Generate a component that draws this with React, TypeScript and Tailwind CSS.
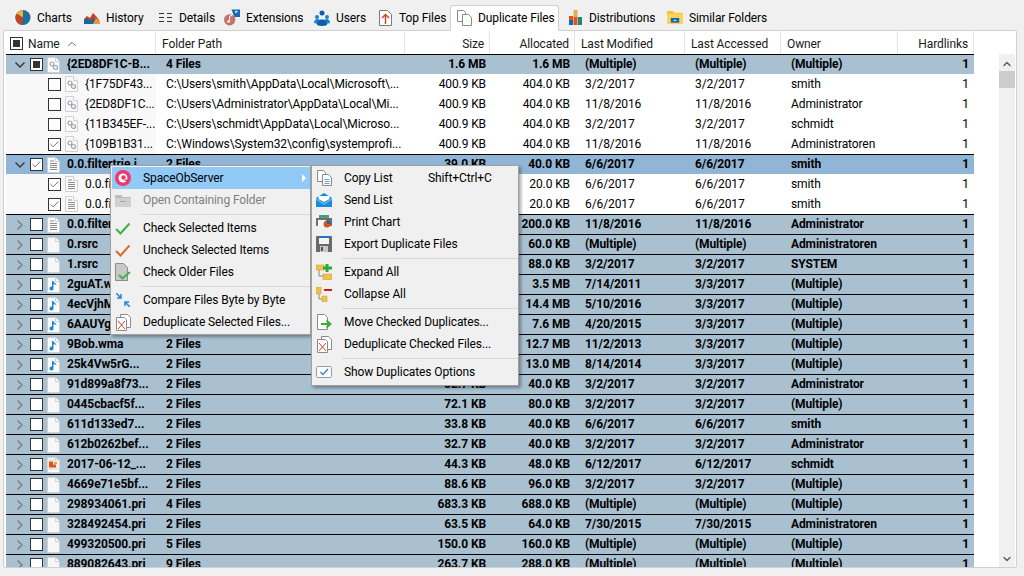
import type { ReactNode } from "react";
import { Check, ChevronDown, ChevronRight, ChevronUp } from "lucide-react";

type Kind = "dll" | "text" | "blank" | "music" | "image";

type RowData = {
  name: string;
  path: string;
  size: string;
  alloc: string;
  modified: string;
  accessed: string;
  owner: string;
  kind: Kind;
  check?: "none" | "checked" | "mixed";
  child?: boolean;
  open?: boolean;
  selected?: boolean;
};

const group = (name: string, path: string, size: string, alloc: string, modified: string, accessed: string, owner: string, kind: Kind = "blank"): RowData => ({
  name, path, size, alloc, modified, accessed, owner, kind,
});

const rows: RowData[] = [
  { ...group("{2ED8DF1C-B...", "4 Files", "1.6 MB", "1.6 MB", "(Multiple)", "(Multiple)", "(Multiple)", "dll"), check: "mixed", open: true },
  { ...group("{1F75DF43...", "C:\\Users\\smith\\AppData\\Local\\Microsoft\\...", "400.9 KB", "404.0 KB", "3/2/2017", "3/2/2017", "smith", "dll"), child: true },
  { ...group("{2ED8DF1C...", "C:\\Users\\Administrator\\AppData\\Local\\Mi...", "400.9 KB", "404.0 KB", "11/8/2016", "11/8/2016", "Administrator", "dll"), child: true },
  { ...group("{11B345EF-...", "C:\\Users\\schmidt\\AppData\\Local\\Microso...", "400.9 KB", "404.0 KB", "3/2/2017", "3/2/2017", "schmidt", "dll"), child: true },
  { ...group("{109B1B31...", "C:\\Windows\\System32\\config\\systemprofi...", "400.9 KB", "404.0 KB", "11/8/2016", "11/8/2016", "Administratoren", "dll"), child: true, check: "checked" },
  { ...group("0.0.filtertrie.i...", "2 Files", "39.0 KB", "40.0 KB", "6/6/2017", "6/6/2017", "smith", "text"), check: "checked", open: true, selected: true },
  { ...group("0.0.filtertrie...", "C:\\Users\\smith\\AppData\\Local\\Packages\\...", "19.5 KB", "20.0 KB", "6/6/2017", "6/6/2017", "smith", "text"), child: true, check: "checked" },
  { ...group("0.0.filtertrie...", "C:\\Users\\smith\\AppData\\Local\\Packages\\...", "19.5 KB", "20.0 KB", "6/6/2017", "6/6/2017", "smith", "text"), child: true, check: "checked" },
  group("0.0.filtertrie...", "4 Files", "195.1 KB", "200.0 KB", "11/8/2016", "11/8/2016", "Administrator", "text"),
  group("0.rsrc", "3 Files", "58.2 KB", "60.0 KB", "(Multiple)", "(Multiple)", "Administratoren"),
  group("1.rsrc", "2 Files", "86.4 KB", "88.0 KB", "3/2/2017", "3/2/2017", "SYSTEM"),
  group("2guAT.wma", "2 Files", "3.5 MB", "3.5 MB", "7/14/2011", "3/3/2017", "(Multiple)", "music"),
  group("4ecVjhM.wma", "2 Files", "14.4 MB", "14.4 MB", "5/10/2016", "3/3/2017", "(Multiple)", "music"),
  group("6AAUYg.wma", "2 Files", "7.6 MB", "7.6 MB", "4/20/2015", "3/3/2017", "(Multiple)", "music"),
  group("9Bob.wma", "2 Files", "12.7 MB", "12.7 MB", "11/2/2013", "3/3/2017", "(Multiple)", "music"),
  group("25k4Vw5rG...", "2 Files", "13.0 MB", "13.0 MB", "8/14/2014", "3/3/2017", "(Multiple)", "music"),
  group("91d899a8f73...", "2 Files", "32.7 KB", "40.0 KB", "3/2/2017", "3/2/2017", "Administrator"),
  group("0445cbacf5f...", "2 Files", "72.1 KB", "80.0 KB", "3/2/2017", "3/2/2017", "(Multiple)"),
  group("611d133ed7...", "2 Files", "33.8 KB", "40.0 KB", "6/6/2017", "6/6/2017", "smith"),
  group("612b0262bef...", "2 Files", "32.7 KB", "40.0 KB", "3/2/2017", "3/2/2017", "Administrator"),
  group("2017-06-12_...", "2 Files", "44.3 KB", "48.0 KB", "6/12/2017", "6/12/2017", "schmidt", "image"),
  group("4669e71e5bf...", "2 Files", "88.6 KB", "96.0 KB", "3/2/2017", "3/2/2017", "(Multiple)"),
  group("298934061.pri", "4 Files", "683.3 KB", "688.0 KB", "(Multiple)", "(Multiple)", "(Multiple)"),
  group("328492454.pri", "2 Files", "63.5 KB", "64.0 KB", "7/30/2015", "7/30/2015", "Administratoren"),
  group("499320500.pri", "5 Files", "150.0 KB", "160.0 KB", "(Multiple)", "(Multiple)", "(Multiple)"),
  group("889082643.pri", "9 Files", "263.7 KB", "288.0 KB", "(Multiple)", "(Multiple)", "(Multiple)"),
];

function FileIcon({ kind }: { kind: Kind }) {
  return (
    <svg width="13" height="16" viewBox="0 0 13 16" className="shrink-0">
      <path d="M.5.5h8l4 4v11H.5z" fill={kind === "blank" ? "#f7f7f7" : "#fbfbfb"} stroke="#d0d0d0" />
      <path d="M8.5.5v4h4" fill="#fff" stroke="#d0d0d0" />
      {kind === "text" && <path d="M3 4h4M3 6.5h7M3 8.5h7M3 10.5h7M3 12.5h7" stroke="#8d8d8d" />}
      {kind === "dll" && (
        <g fill="none" stroke="#9aa3ad" strokeWidth="1.2">
          <circle cx="5" cy="7" r="2" />
          <circle cx="8.5" cy="10.5" r="2" />
        </g>
      )}
      {kind === "music" && (
        <path d="M6.5 4v7.5a2 2 0 1 1-1.500-1.900V4h1.500c0 2 3 2 3 4.500-1-1.200-2-1.300-3-1.300z" fill="#1e88d8" />
      )}
      {kind === "image" && (
        <g>
          <rect x=".5" y="3" width="12" height="9" fill="#f7f1e8" stroke="#d8d8d8" />
          <path d="M2 4.500h4v3h3v3H2z" fill="#d9541e" />
          <rect x="7" y="5" width="3" height="2" fill="#e8a33a" />
        </g>
      )}
    </svg>
  );
}

function Box({ state = "none" }: { state?: "none" | "checked" | "mixed" }) {
  return (
    <span className="flex h-[13px] w-[13px] shrink-0 items-center justify-center border border-[#333333] bg-white">
      {state === "checked" && <Check size={11} strokeWidth={1.5} className="text-[#333333]" />}
      {state === "mixed" && <span className="h-[7px] w-[7px] bg-[#333333]" />}
    </span>
  );
}

function TreeRow({ row }: { row: RowData }) {
  const rowBg = row.child ? "bg-white" : row.selected ? "bg-[#90b5d6] font-bold" : "bg-[#a9c0d1] font-bold";
  const line = row.child ? "" : "border-t border-black";
  // group rows carry a top line, their text still sits one pixel higher than the boxes
  const lift = row.child ? "" : "pb-[2px]";
  return (
    <div className={`grid h-5 grid-cols-[150px_249px_85px_85px_110px_96px_117px_76px] items-center whitespace-nowrap text-black ${rowBg} ${line}`}>
      <div className={`flex h-full items-center overflow-hidden ${row.child ? "bg-[#f8f8f8] pl-[42px]" : "pl-[10px]"}`}>
        {!row.child && (
          <span className="mr-[6px] w-[8px] shrink-0">
            {row.open ? (
              <ChevronDown size={16} strokeWidth={2.500} className="-ml-[4px] text-[#404040]" />
            ) : (
              <ChevronRight size={16} strokeWidth={2.500} className="-ml-[4px] text-[#808080]" />
            )}
          </span>
        )}
        <Box state={row.check} />
        <span className="ml-[4px]">
          <FileIcon kind={row.kind} />
        </span>
        <span className={`ml-[7px] ${lift}`}>{row.name}</span>
      </div>
      <div className={`pl-[10px] ${lift}`}>{row.path}</div>
      <div className={`pr-[4px] text-right ${lift}`}>{row.size}</div>
      <div className={`pr-[5px] text-right ${lift}`}>{row.alloc}</div>
      <div className={`pl-[10px] ${lift}`}>{row.modified}</div>
      <div className={`pl-[10px] ${lift}`}>{row.accessed}</div>
      <div className={`pl-[10px] ${lift}`}>{row.owner}</div>
      <div className={`pr-[5px] text-right ${lift}`}>1</div>
    </div>
  );
}

function HeadCell({ children, right, className = "" }: { children: ReactNode; right?: boolean; className?: string }) {
  return (
    <div className={`flex h-[23px] items-center border-r border-[#e5e5e5] pt-[2px] text-[#1a1a1a] ${right ? "justify-end pr-[5px]" : "pl-[6px]"} ${className}`}>
      {children}
    </div>
  );
}

const PieIcon = () => (
  <svg width="17" height="17" viewBox="0 0 17 17">
    <circle cx="8.500" cy="8.500" r="8" fill="#1d6f9e" />
    <path d="M8.500 8.500V.5A8 8 0 0 0 1.500 4.500z" fill="#e8b33c" />
    <path d="M8.500 8.500L1.500 4.500A8 8 0 0 0 7 16.400z" fill="#c8431f" />
  </svg>
);
const HistoryIcon = () => (
  <svg width="16" height="14" viewBox="0 0 16 14">
    <path d="M0 13V8l3-3 3 2 3-5 3 3 3 4 1 4z" fill="#c9412a" />
    <path d="M0 13V9l3-2 3 3 3-3 3 3 4 1v2z" fill="#17689c" />
    <path d="M9 13l3-6 4 4v2z" fill="#e89a3c" />
  </svg>
);
const DetailsIcon = () => (
  <svg width="13" height="12" viewBox="0 0 13 12" stroke="#333333">
    <path d="M0 1.500h5M8 1.500h5M0 5.500h5M8 5.500h5M0 9.500h5M8 9.500h5" />
  </svg>
);
const ExtensionsIcon = () => (
  <svg width="17" height="17" viewBox="0 0 17 17">
    <path d="M8 0h9v8H11z" fill="#1668b0" />
    <path d="M12 1l3 1-3 2z" fill="#fff" />
    <circle cx="6" cy="11" r="6" fill="#c8706a" />
    <path d="M6 7v5.500M6 7l2.500-.7" stroke="#fff" fill="none" />
    <circle cx="4.800" cy="12.800" r="1.300" fill="#fff" />
  </svg>
);
const UsersIcon = () => (
  <svg width="16" height="16" viewBox="0 0 16 16" fill="#1f7fd0">
    <circle cx="8" cy="3" r="2.500" fill="#0f5fa8" />
    <circle cx="3" cy="7" r="2" />
    <circle cx="13" cy="7" r="2" />
    <path d="M0 13c0-3 2-4 3-4s2 .5 3 1l-2 4z" />
    <path d="M16 13c0-3-2-4-3-4s-2 .5-3 1l2 4z" />
    <path d="M3 15c0-4 2-5.500 5-5.500s5 1.500 5 5.500c-3 1.300-7 1.300-10 0z" fill="#0f5fa8" />
  </svg>
);
const TopFilesIcon = () => (
  <svg width="13" height="16" viewBox="0 0 13 16" fill="none">
    <path d="M.5.5h8l4 4v11H.5z" fill="#fff" stroke="#7a7a7a" />
    <path d="M6.500 14V5M3 8l3.500-3.500L10 8" stroke="#d8411f" strokeWidth="1.400" />
  </svg>
);
const DocsIcon = ({ stroke = "#8a8a8a", lines = false }: { stroke?: string; lines?: boolean }) => (
  <svg width="15" height="16" viewBox="0 0 15 16" fill="#fff" stroke={stroke}>
    <path d="M.5.5h6l2 2v9H.5z" />
    <path d="M5.500 4.500h6l3 3v8h-9z" />
    {lines && <path d="M7.500 9.500h5M7.500 11.500h5M7.500 13.500h5" stroke="#6f9fd0" />}
  </svg>
);
const BarsIcon = () => (
  <svg width="13" height="15" viewBox="0 0 13 15">
    <rect x="0" y="6" width="4" height="4" fill="#d9541e" />
    <rect x="0" y="10" width="4" height="5" fill="#1668a8" />
    <rect x="4.500" y="0" width="4" height="7" fill="#e0b050" />
    <rect x="4.500" y="7" width="4" height="8" fill="#d9541e" />
    <rect x="9" y="7" width="4" height="8" fill="#1f8a70" />
  </svg>
);
const FolderIcon = () => (
  <svg width="17" height="15" viewBox="0 0 17 15">
    <path d="M0 1.500A1 1 0 0 1 1 .5h5l2 2h9v12H0z" fill="#f5c13a" />
    <rect x="0" y="3.500" width="17" height="11" fill="#fbd35a" />
    <rect x="4" y="8" width="9" height="5" fill="#1668b0" />
    <rect x="7" y="10" width="3" height="1" fill="#fff" />
  </svg>
);

function Tab({ icon, label, width, active }: { icon: ReactNode; label: string; width: string; active?: boolean }) {
  return (
    <div className={`flex items-center gap-[6px] ${width} ${active ? "relative z-10 h-[26px] self-start rounded-t-[3px] border border-b-0 border-[#d0d0d0] bg-white pb-px pl-[5px]" : "h-full"}`}>
      <span className="flex w-[16px] shrink-0 justify-center">{icon}</span>
      <span>{label}</span>
    </div>
  );
}

const SpaceIcon = () => (
  <svg width="18" height="18" viewBox="0 0 18 18">
    <circle cx="9" cy="9" r="8" fill="#ee3a6a" />
    <circle cx="9" cy="9" r="4.500" fill="#fff" />
    <circle cx="9.500" cy="8.500" r="2.200" fill="#ee3a6a" />
    <path d="M10 11l4-1-1 3z" fill="#ee3a6a" />
  </svg>
);
const MutedFolder = () => (
  <svg width="16" height="13" viewBox="0 0 16 13">
    <path d="M0 1h6l2 2h8v10H0z" fill="#bdbdbd" />
    <rect x="0" y="4" width="16" height="9" fill="#d0d0d0" />
    <rect x="5" y="7" width="6" height="1" fill="#a8a8a8" />
  </svg>
);
const Tick = ({ color }: { color: string }) => (
  <svg width="16" height="13" viewBox="0 0 16 13" fill="none">
    <path d="M1 7l4.500 4.500L14.500 1.500" stroke={color} strokeWidth="2" />
  </svg>
);
const OlderIcon = () => (
  <svg width="16" height="18" viewBox="0 0 16 18">
    <path d="M.5.5h8l4 4v13H.5z" fill="#c8c8c8" stroke="#8c8c8c" />
    <path d="M4 12l3.500 3.500L15 9" fill="none" stroke="#3fb04a" strokeWidth="2" />
  </svg>
);
const CompareIcon = () => (
  <svg width="14" height="14" viewBox="0 0 14 14" fill="none" stroke="#1e88d8" strokeWidth="1.500">
    <path d="M0 0l5 5M5 1v4H1M14 14L9 9M9 13V9h4" />
  </svg>
);
const DedupIcon = () => (
  <svg width="15" height="17" viewBox="0 0 15 17" fill="#fff">
    <path d="M4.500.5h7l3 3v10h-10z" stroke="#8a8a8a" />
    <path d="M.5 3.500h8l2 2v11h-10z" stroke="#8a8a8a" />
    <path d="M2 7l7 8M9 7l-7 8" stroke="#d8411f" />
  </svg>
);
const MailIcon = () => (
  <svg width="16" height="14" viewBox="0 0 16 14">
    <path d="M0 5l8-5 8 5v9H0z" fill="#1e88d8" />
    <path d="M2.500 6V3h11v3L8 9z" fill="#fff" />
    <path d="M0 5l8 5 8-5v2l-8 5-8-5z" fill="#5db5ee" />
  </svg>
);
const PrintIcon = () => (
  <svg width="16" height="14" viewBox="0 0 16 14">
    <rect x="3" y="0" width="10" height="3" fill="#3fa08a" />
    <rect x="0" y="3" width="16" height="8" fill="#6f6f6f" />
    <rect x="2" y="5" width="8" height="6" fill="#fff" />
    <circle cx="11" cy="9" r="3.500" fill="#d8541e" />
    <path d="M11 9V5.500A3.500 3.500 0 0 1 14.500 9z" fill="#1668a8" />
  </svg>
);
const SaveIcon = () => (
  <svg width="16" height="16" viewBox="0 0 16 16">
    <rect width="16" height="16" rx="1" fill="#6a6a6a" />
    <rect x="2.500" y="0" width="11" height="2" fill="#1e78c8" />
    <rect x="3" y="2" width="10" height="6" fill="#f4f4f4" />
    <rect x="4" y="10" width="8" height="6" fill="#c8c8c8" />
    <rect x="5" y="11" width="2" height="4" fill="#555555" />
  </svg>
);
const ExpandIcon = () => (
  <svg width="16" height="16" viewBox="0 0 16 16">
    <path d="M3 5v7h5" stroke="#8a8a8a" fill="none" />
    <rect x="0" y="1" width="8" height="5" fill="#f2c14a" stroke="#c9972a" strokeWidth=".5" />
    <rect x="7" y="10" width="9" height="6" fill="#f2c14a" stroke="#c9972a" strokeWidth=".5" />
    <path d="M11 0v8M7 4h9" stroke="#2fa83a" strokeWidth="3" />
  </svg>
);
const CollapseIcon = () => (
  <svg width="16" height="15" viewBox="0 0 16 15">
    <path d="M3 5v7h3" stroke="#8a8a8a" fill="none" />
    <rect x="0" y="0" width="5" height="7" fill="#f2c14a" stroke="#c9972a" strokeWidth=".5" />
    <rect x="6" y="9" width="5" height="6" fill="#f2c14a" stroke="#c9972a" strokeWidth=".5" />
    <rect x="8" y="2" width="8" height="2" fill="#c8201e" />
  </svg>
);
const MoveIcon = () => (
  <svg width="16" height="16" viewBox="0 0 16 16" fill="none">
    <path d="M1.500.5h7l3 3v12h-10z" fill="#fff" stroke="#8a8a8a" />
    <path d="M5 10h9M10.500 6.500L14.500 10l-4 3.500" stroke="#3fa83a" strokeWidth="1.800" />
  </svg>
);
const OptionsIcon = () => (
  <svg width="16" height="12" viewBox="0 0 16 12" fill="#fbfbfb">
    <rect x=".5" y=".5" width="15" height="11" rx="1" stroke="#9a9a9a" />
    <path d="M4.500 6l2.500 2.500L12 3" stroke="#3a8ad8" strokeWidth="1.500" fill="none" />
  </svg>
);

function MenuItem({ icon, label, shortcut, muted, hot, arrow }: { icon: ReactNode; label: string; shortcut?: string; muted?: boolean; hot?: boolean; arrow?: boolean }) {
  return (
    <div className={`relative flex h-[22px] items-center ${hot ? "bg-[#91c9f7]" : ""} ${muted ? "text-[#7f7f7f]" : "text-black"}`}>
      <span className="ml-[1px] mr-[10px] flex w-[20px] shrink-0 justify-center">{icon}</span>
      <span>{label}</span>
      {shortcut && <span className="absolute left-[115px]">{shortcut}</span>}
      {arrow && <span className="absolute right-[4px] h-0 w-0 border-y-[4px] border-l-[4px] border-y-transparent border-l-white" />}
    </div>
  );
}

const Divider = () => <div className="my-[2.500px] ml-[29px] h-px bg-[#d7d7d7]" />;

function LeftMenu() {
  return (
    <div className="absolute left-[110px] top-[165px] z-20 w-[201px] border border-[#a0a0a0] bg-[#f0f0f0] py-[1px] pl-[1px] shadow-[2px_2px_3px_rgba(0,0,0,0.35)]">
      <MenuItem hot arrow icon={<SpaceIcon />} label="SpaceObServer" />
      <MenuItem muted icon={<MutedFolder />} label="Open Containing Folder" />
      <Divider />
      <MenuItem icon={<Tick color="#3fb04a" />} label="Check Selected Items" />
      <MenuItem icon={<Tick color="#e2682a" />} label="Uncheck Selected Items" />
      <MenuItem icon={<OlderIcon />} label="Check Older Files" />
      <Divider />
      <MenuItem icon={<CompareIcon />} label="Compare Files Byte by Byte" />
      <MenuItem icon={<DedupIcon />} label="Deduplicate Selected Files..." />
    </div>
  );
}

function RightMenu() {
  return (
    <div className="absolute left-[311px] top-[165px] z-30 w-[208px] border border-[#a0a0a0] bg-[#f0f0f0] pb-[2px] pt-[1px] pl-[1px] shadow-[2px_2px_3px_rgba(0,0,0,0.35)]">
      <MenuItem icon={<DocsIcon lines />} label="Copy List" shortcut="Shift+Ctrl+C" />
      <MenuItem icon={<MailIcon />} label="Send List" />
      <MenuItem icon={<PrintIcon />} label="Print Chart" />
      <MenuItem icon={<SaveIcon />} label="Export Duplicate Files" />
      <Divider />
      <MenuItem icon={<ExpandIcon />} label="Expand All" />
      <MenuItem icon={<CollapseIcon />} label="Collapse All" />
      <Divider />
      <MenuItem icon={<MoveIcon />} label="Move Checked Duplicates..." />
      <MenuItem icon={<DedupIcon />} label="Deduplicate Checked Files..." />
      <Divider />
      <MenuItem icon={<OptionsIcon />} label="Show Duplicates Options" />
    </div>
  );
}

export default function App() {
  return (
    <div className="relative flex h-[576px] w-[1024px] flex-col overflow-hidden bg-[#f0f0f0] text-[12px] tracking-[-0.1px] leading-none font-['Roboto',sans-serif] text-black">
      <div className="flex h-[30px] shrink-0 items-end pl-[15px]">
        <div className="flex h-[25px] items-center">
          <Tab width="w-[69px]" icon={<PieIcon />} label="Charts" />
          <Tab width="w-[73px]" icon={<HistoryIcon />} label="History" />
          <Tab width="w-[67px]" icon={<DetailsIcon />} label="Details" />
          <Tab width="w-[90px]" icon={<ExtensionsIcon />} label="Extensions" />
          <Tab width="w-[63px]" icon={<UsersIcon />} label="Users" />
          <Tab width="w-[73px]" icon={<TopFilesIcon />} label="Top Files" />
          <Tab active width="w-[109px]" icon={<DocsIcon />} label="Duplicate Files" />
          <div className="w-[8px]" />
          <Tab width="w-[100px]" icon={<BarsIcon />} label="Distributions" />
          <Tab width="w-[110px]" icon={<FolderIcon />} label="Similar Folders" />
        </div>
      </div>

      <div className="mb-[8px] ml-[3px] mr-[7px] flex min-h-0 flex-1 overflow-hidden rounded-[2px] border border-[#d0d0d0] bg-white pl-[2px]">
        <div className="w-[968px] shrink-0 overflow-hidden">
          <div className="grid grid-cols-[150px_249px_85px_85px_110px_96px_117px_76px]">
            <HeadCell className="!pl-[4px]">
              <Box state="mixed" />
              <span className="ml-[5px]">Name</span>
              <ChevronUp size={14} strokeWidth={1.500} className="ml-[5px] text-[#555555]" />
            </HeadCell>
            <HeadCell>Folder Path</HeadCell>
            <HeadCell right>Size</HeadCell>
            <HeadCell right>Allocated</HeadCell>
            <HeadCell>Last Modified</HeadCell>
            <HeadCell>Last Accessed</HeadCell>
            <HeadCell>Owner</HeadCell>
            <HeadCell right>Hardlinks</HeadCell>
          </div>
          {rows.map((row, i) => (
            <TreeRow key={i} row={row} />
          ))}
        </div>
        <div className="ml-[25px] mt-[23px] flex w-[16px] shrink-0 flex-col items-center bg-[#f0f0f0]">
          <ChevronUp size={12} strokeWidth={3} className="mt-[4px] text-[#606060]" />
          <div className="mt-[1px] h-[17px] w-full bg-[#cdcdcd]" />
          <ChevronDown size={12} strokeWidth={3} className="mt-auto mb-[2px] text-[#606060]" />
        </div>
      </div>

      <LeftMenu />
      <RightMenu />
    </div>
  );
}
